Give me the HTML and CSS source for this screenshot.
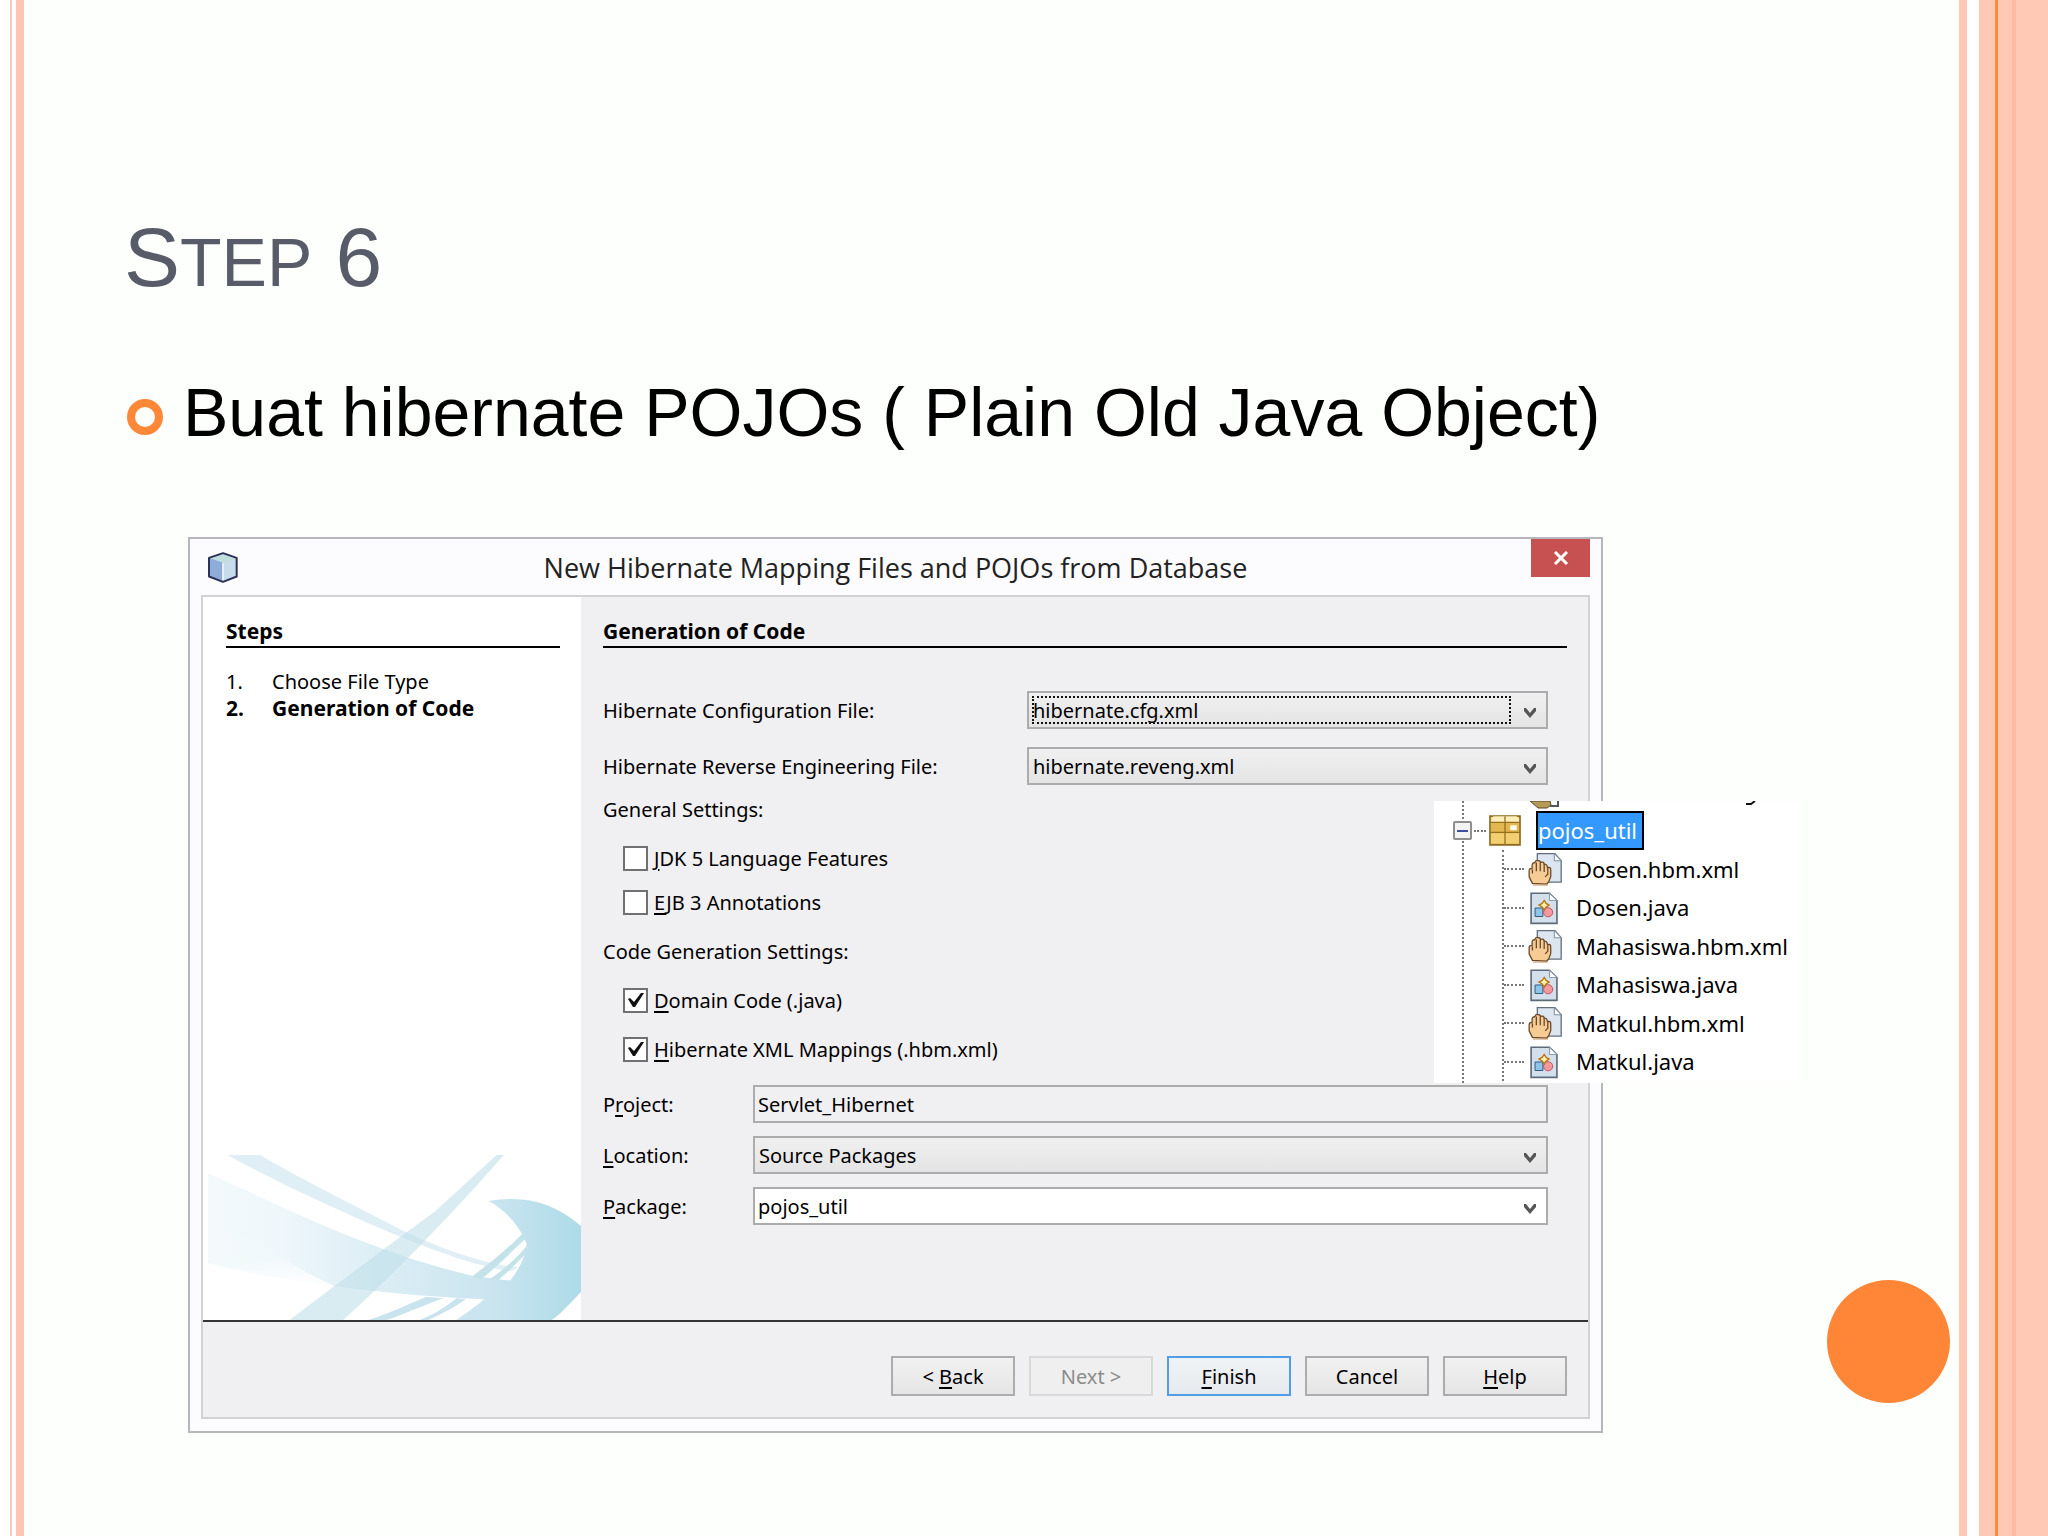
FILE: index.html
```
<!DOCTYPE html>
<html lang="id">
<head>
  <meta charset="UTF-8">
  <meta name="viewport" content="width=device-width, initial-scale=1.0">
  <title>Step 6</title>
  <link rel="stylesheet" href="styles.css">
</head>
<body>
  <!-- Icon definitions -->
  <svg class="defs" aria-hidden="true">
    <symbol id="icon-hbm" viewBox="322 186 106 104">
      <path d="M350 191h54l19 22v65h-73z" fill="#dce6f1" stroke="#62707f" stroke-width="4"/>
      <path d="M402 191v22h21z" fill="#fff" stroke="#7d8b9a" stroke-width="3"/>
      <path d="M335 282l-10-20v-20q2-8 9-4v-12q1-8 8-7 2-8 9-7 8 0 9 6 9-4 11 5 8-1 9 6l1 5q10-4 10 7v20l-6 16-6 7z" fill="#f6cb94" stroke="#6b4a2c" stroke-width="4" stroke-linejoin="round"/>
      <path d="M335 240v12M347 218v27M359 218v27M371 222v25M382 232v22l-8 8" fill="none" stroke="#6b4a2c" stroke-width="4"/>
      <path d="M336 287h46" stroke="#c98e58" stroke-width="3"/>
    </symbol>
    <symbol id="icon-java" viewBox="322 301 106 104">
      <path d="M331 308h56l23 22v70h-79z" fill="#d3e0ec" stroke="#5c6b7a" stroke-width="5"/>
      <path d="M387 308v22h23z" fill="#fff" stroke="#8a97a5" stroke-width="3"/>
      <path d="M343 353h24v26h-24z" fill="#8cc4ea" stroke="#33597c" stroke-width="3"/>
      <circle cx="383" cy="366" r="14" fill="#f49a9e" stroke="#c4525c" stroke-width="3"/>
      <path d="M371 330l6 9 9 5-9 6-6 9-6-9-10-6 10-5z" fill="#fff0b0" stroke="#b87412" stroke-width="4"/>
    </symbol>
  </svg>

  <div class="slide">
    <div class="stripes-left"></div>

    <main class="content">
      <h1>S<span>TEP</span> 6</h1>

      <ul class="points">
        <li>Buat hibernate POJOs ( Plain Old Java Object)</li>
      </ul>

      <section class="dialog">
        <header class="titlebar">
          <svg class="app-icon" viewBox="84 62 90 92">
            <path d="M129 65l41 14v56l-41 16-42-16V79z" fill="#a9c3e6"/>
            <path d="M87 79l42 14v58l-42-16z" fill="#8fabd9"/>
            <path d="M129 93l41-14v56l-41 16z" fill="#c6dcec"/>
            <path d="M129 65l41 14-41 15-42-15z" fill="#bfdfdd"/>
            <path d="M129 94v56" fill="none" stroke="#eef7fb" stroke-width="5"/>
            <path d="M129 65l41 14v56l-41 16-42-16V79z" fill="none" stroke="#2c3157" stroke-width="6" stroke-linejoin="round"/>
          </svg>
          <h2>New Hibernate Mapping Files and POJOs from Database</h2>
          <button class="close" type="button" aria-label="Close">
            <svg viewBox="0 0 16 14"><path d="M2 1l12 12M14 1L2 13" stroke="#fff" stroke-width="3"/></svg>
          </button>
        </header>

        <form class="frame">
          <div class="panes">
            <aside class="steps">
              <h3>Steps</h3>
              <ol>
                <li><span>1.</span>Choose File Type</li>
                <li class="current"><span>2.</span>Generation of Code</li>
              </ol>
              <svg class="waves" viewBox="55 75 1118 495" preserveAspectRatio="none">
                <defs>
                  <linearGradient id="band" gradientUnits="userSpaceOnUse" x1="55" y1="0" x2="900" y2="0">
                    <stop offset="0" stop-color="#f3fafc"/>
                    <stop offset="0.25" stop-color="#eff7fb"/>
                    <stop offset="0.6" stop-color="#dceef5"/>
                    <stop offset="1" stop-color="#cbe5f0"/>
                  </linearGradient>
                  <linearGradient id="curl" gradientUnits="userSpaceOnUse" x1="895" y1="0" x2="1173" y2="0">
                    <stop offset="0" stop-color="#cbe5f0"/>
                    <stop offset="1" stop-color="#aedbe8"/>
                  </linearGradient>
                  <linearGradient id="fade" x1="0" y1="0" x2="0.3" y2="1">
                    <stop offset="0" stop-color="#fff" stop-opacity="0"/>
                    <stop offset="0.7" stop-color="#fff" stop-opacity="0.1"/>
                    <stop offset="1" stop-color="#fff" stop-opacity="0.8"/>
                  </linearGradient>
                </defs>
                <path d="M55 130C240 210 520 360 850 438L960 452 890 508C650 500 300 460 55 400z" fill="url(#band)"/>
                <path d="M55 250C200 330 320 420 440 470 300 460 150 440 55 400z" fill="url(#fade)"/>
                <path d="M113 75h97C340 150 520 240 640 302 760 360 880 400 985 412L960 424C820 400 680 340 560 290 400 220 250 150 113 75z" fill="#e0eff6"/>
                <path d="M920 75h22C850 180 650 400 460 570H300C430 470 620 330 740 240z" fill="#bfdfea" fill-opacity="0.6"/>
                <path d="M535 570C600 550 660 520 710 500l50 5C690 530 640 555 590 570zM690 570C740 550 775 525 800 505l28 3C790 535 750 555 715 570z" fill="#c9e4ed"/>
                <path d="M845 440C900 400 960 350 1000 308l5 20C960 370 920 410 875 447zM900 447C940 420 980 385 1008 350l2 18C980 400 950 430 925 450z" fill="#c3e3e9"/>
                <path d="M895 213C1000 195 1090 215 1173 288v198C1140 520 1110 555 1085 570H800C850 535 870 520 885 505V445L960 452C985 420 1005 390 1010 340 985 280 940 235 895 213z" fill="url(#curl)"/>
              </svg>
            </aside>

            <div class="settings">
              <h3>Generation of Code</h3>

              <div class="row wide">
                <label for="config">Hibernate Configuration File:</label>
                <div class="combo focused">
                  <select id="config"><option>hibernate.cfg.xml</option></select>
                  <svg class="arrow" viewBox="0 0 14 12"><path d="M1 1v3l6 7 6-7V1h-2L7 6 3 1z"/></svg>
                </div>
              </div>
              <div class="row wide">
                <label for="reveng">Hibernate Reverse Engineering File:</label>
                <div class="combo">
                  <select id="reveng"><option>hibernate.reveng.xml</option></select>
                  <svg class="arrow" viewBox="0 0 14 12"><path d="M1 1v3l6 7 6-7V1h-2L7 6 3 1z"/></svg>
                </div>
              </div>

              <fieldset class="general">
                <legend>General Settings:</legend>
                <label class="check"><input type="checkbox"><span><u>J</u>DK 5 Language Features</span></label>
                <label class="check"><input type="checkbox"><span><u>E</u>JB 3 Annotations</span></label>
              </fieldset>

              <fieldset class="codegen">
                <legend>Code Generation Settings:</legend>
                <label class="check"><input type="checkbox" checked><span><u>D</u>omain Code (.java)</span></label>
                <label class="check"><input type="checkbox" checked><span><u>H</u>ibernate XML Mappings (.hbm.xml)</span></label>
              </fieldset>

              <div class="row">
                <label for="project">P<u>r</u>oject:</label>
                <input class="text" id="project" type="text" value="Servlet_Hibernet" readonly>
              </div>
              <div class="row">
                <label for="location"><u>L</u>ocation:</label>
                <div class="combo">
                  <select id="location"><option>Source Packages</option></select>
                  <svg class="arrow" viewBox="0 0 14 12"><path d="M1 1v3l6 7 6-7V1h-2L7 6 3 1z"/></svg>
                </div>
              </div>
              <div class="row">
                <label for="package"><u>P</u>ackage:</label>
                <div class="combo editable">
                  <select id="package"><option>pojos_util</option></select>
                  <svg class="arrow" viewBox="0 0 14 12"><path d="M1 1v3l6 7 6-7V1h-2L7 6 3 1z"/></svg>
                </div>
              </div>
            </div>
          </div>

          <footer class="buttons">
            <button type="button">&lt; <u>B</u>ack</button>
            <button type="button" disabled>Next &gt;</button>
            <button type="button" class="default"><u>F</u>inish</button>
            <button type="button">Cancel</button>
            <button type="button"><u>H</u>elp</button>
          </footer>
        </form>

        <!-- Project tree lying over the dialog -->
        <div class="tree">
          <svg class="cut-row" viewBox="0 0 366 8">
            <path d="M96 0h20l1 4-4 3h-9z" fill="#b69a55" stroke="#55482a" stroke-width="1"/>
            <path d="M116 5h8V0" fill="none" stroke="#4d5864" stroke-width="2"/>
            <path d="M312 3h5l4-3" fill="none" stroke="#111" stroke-width="2"/>
          </svg>
          <div class="package">
            <button class="toggle" type="button" aria-label="Collapse"></button>
            <i></i>
            <svg class="box" viewBox="206 79 98 94">
              <path d="M209 82h92v88h-92z" fill="#e9c05a" stroke="#8d6a1e" stroke-width="5"/>
              <path d="M213 88l7-6h70l8 6v13h-85z" fill="#fbeebb"/>
              <path d="M212 103h86v28h-86z" fill="#e2b650"/>
              <path d="M212 135h86v30h-86z" fill="#f2d071"/>
              <path d="M271 110h20v15h-20z" fill="#fffbe6"/>
              <path d="M209 101h92M209 132h92M255 82v88" stroke="#96701f" stroke-width="4"/>
            </svg>
            <span class="selected">pojos_util</span>
          </div>
          <ul>
            <li><svg><use href="#icon-hbm"/></svg>Dosen.hbm.xml</li>
            <li><svg><use href="#icon-java"/></svg>Dosen.java</li>
            <li><svg><use href="#icon-hbm"/></svg>Mahasiswa.hbm.xml</li>
            <li><svg><use href="#icon-java"/></svg>Mahasiswa.java</li>
            <li><svg><use href="#icon-hbm"/></svg>Matkul.hbm.xml</li>
            <li><svg><use href="#icon-java"/></svg>Matkul.java</li>
          </ul>
        </div>
      </section>

      <div class="dot"></div>
    </main>

    <div class="stripes-right"></div>
  </div>
</body>
</html>
```
FILE: styles.css
```
*,
*::before,
*::after {
  box-sizing: border-box;
  margin: 0;
  padding: 0;
}

body {
  font-family: "Liberation Sans", Arial, sans-serif;
  background-color: #fdfffd;
  color: #000;
}

.defs {
  display: none;
}

.slide {
  display: flex;
  min-height: 100vh;
}

.stripes-left {
  width: 24px;
  background: linear-gradient(to right, #fff 10px, #fbc9b7 10px, #fbc9b7 12px, #fff 12px, #fff 16px, #fcc6b2 16px);
}

.stripes-right {
  width: 89px;
  background: linear-gradient(to right,
    #ffc8b4 8px, #fff 8px, #fff 20px,
    #ffc9b5 20px, #ffc9b5 36px,
    #ff8a3c 36px, #ff8a3c 39px,
    #ffc9b5 39px, #ffc9b5 53px,
    #ffbba0 53px, #ffbba0 57px,
    #ffc9b5 57px);
}

.content {
  position: relative;
  flex: 1;
  padding: 209px 0 102px 100px;
}

h1 {
  font-size: 84px;
  font-weight: normal;
  line-height: 96px;
  color: #585c69;
}

h1 span {
  font-size: 68px;
  line-height: 1;
}

.points {
  list-style: none;
  margin-top: 68px;
  font-size: 68px;
  line-height: 78px;
}

.points li {
  display: flex;
  align-items: center;
  gap: 20px;
  padding-left: 3px;
}

.points li::before {
  content: "";
  width: 36px;
  height: 36px;
  margin-top: 10px;
  border: 8px solid #ff8838;
  border-radius: 50%;
}

.dot {
  position: absolute;
  right: 9px;
  bottom: 133px;
  width: 123px;
  height: 123px;
  border-radius: 50%;
  background-color: #ff8637;
}

/* Dialog */
.dialog {
  position: relative;
  margin: 86px 356px 0 64px;
  padding: 0 11px 12px;
  border: 2px solid #b6b6bb;
  background-color: #fcfbfe;
  font-family: "Noto Sans", Tahoma, sans-serif;
  font-size: 20px;
  line-height: 27px;
}

.titlebar {
  display: grid;
  grid-template-columns: 1fr auto 1fr;
  align-items: center;
  height: 56px;
}

.titlebar h2 {
  font-family: "Open Sans", "Segoe UI", sans-serif;
  font-size: 27px;
  font-weight: normal;
  color: #222;
}

.app-icon {
  width: 30px;
  height: 31px;
  margin-left: 7px;
}

.close {
  display: flex;
  align-items: center;
  justify-content: center;
  align-self: start;
  justify-self: end;
  width: 59px;
  height: 38px;
  border: none;
  background-color: #c75050;
}

.close svg {
  width: 16px;
  height: 14px;
}

.frame {
  border: 2px solid #d2d2d5;
  background-color: #f0eff1;
}

.panes {
  display: flex;
  min-height: 725px;
  border-bottom: 2px solid #333;
}

h3 {
  padding: 21px 0 1px;
  border-bottom: 2px solid #000;
  font-size: 21px;
}

.steps {
  display: flex;
  flex-direction: column;
  width: 378px;
  padding: 0 21px 0 23px;
  background-color: #fff;
}

.steps ol {
  list-style: none;
  margin-top: 20px;
}

.steps li {
  display: flex;
}

.steps li span {
  width: 46px;
}

.steps .current {
  font-size: 21px;
  font-weight: bold;
}

.waves {
  height: 165px;
  margin: auto -21px 0 -18px;
}

.settings {
  flex: 1;
  padding: 0 21px 0 22px;
}

.row {
  display: flex;
  align-items: center;
  margin: 13px 19px 0 0;
}

.row label {
  width: 150px;
}

.row.wide {
  margin-top: 18px;
}

.row.wide label {
  width: 424px;
}

h3 + .row.wide {
  margin-top: 43px;
}

.combo {
  position: relative;
  flex: 1;
}

.combo select,
.text {
  display: block;
  width: 100%;
  height: 38px;
  padding: 0 4px;
  border: 2px solid #acacac;
  border-radius: 0;
  appearance: none;
  background: linear-gradient(#f0f0f0, #e4e4e5);
  color: #000;
  font: inherit;
}

.text {
  flex: 1;
  background: #f0eff1;
  padding: 0 3px;
}

.combo.editable select {
  background: #fff;
  padding: 0 3px;
}

.combo.focused::after {
  content: "";
  position: absolute;
  inset: 5px 37px 5px 5px;
  border: 2px dotted #111;
  pointer-events: none;
}

.arrow {
  position: absolute;
  right: 10px;
  top: 16px;
  width: 16px;
  height: 12px;
  fill: #555;
  pointer-events: none;
}

fieldset {
  border: none;
}

.general {
  margin-top: 11px;
}

.codegen {
  margin: 22px 0;
}

.check {
  display: flex;
  align-items: center;
  gap: 6px;
  margin: 22px 0 0 20px;
}

.general .check + .check {
  margin-top: 17px;
}

.check input {
  width: 25px;
  height: 25px;
  border: 2px solid #707070;
  appearance: none;
  background: #fff;
}

.check input:checked {
  background: #fff url("data:image/svg+xml,%3Csvg xmlns='http://www.w3.org/2000/svg' viewBox='0 0 21 21'%3E%3Cpath d='M3 9l2-1 4 4 7-9h3L10 17H8z' fill='%23111'/%3E%3C/svg%3E") center / 21px;
}

u {
  text-underline-offset: 3px;
  text-decoration-thickness: 2px;
}

.buttons {
  display: flex;
  justify-content: flex-end;
  gap: 14px;
  padding: 34px 21px 21px;
}

.buttons button {
  width: 124px;
  height: 40px;
  border: 2px solid #acacac;
  background: linear-gradient(#f1f1f1, #e5e5e6);
  color: #000;
  font: inherit;
}

.buttons button:disabled {
  border-color: #d9d9d9;
  background: #efeff0;
  color: #8b8b8b;
}

.buttons .default {
  border-color: #4f9fe6;
  background: linear-gradient(#f0f3f5, #e6eaee);
}

/* Tree */
.tree {
  position: absolute;
  top: 262px;
  right: -199px;
  width: 366px;
  padding: 10px 0 2px;
  background-color: #fff;
  font-size: 22px;
}

.tree::before {
  content: "";
  position: absolute;
  top: 0;
  bottom: 0;
  left: 28px;
  border-left: 2px dotted #777;
}

.cut-row {
  position: absolute;
  top: 0;
  left: 0;
  width: 366px;
  height: 8px;
}

.package {
  display: flex;
  align-items: center;
  height: 39px;
  padding-left: 19px;
}

.toggle {
  position: relative;
  width: 19px;
  height: 19px;
  border: 2px solid #8e8e8e;
  border-radius: 2px;
  background: linear-gradient(#3b4f9e, #3b4f9e) center / 11px 2px no-repeat #f3f3f3;
}

.package i {
  width: 12px;
  margin: 0 3px 0 2px;
  border-top: 2px dotted #777;
}

.box {
  width: 32px;
  height: 31px;
}

.selected {
  height: 39px;
  margin-left: 15px;
  padding-right: 5px;
  border: 2px solid #000;
  background-color: #3399ff;
  color: #fff;
  line-height: 34px;
}

.tree ul {
  display: flex;
  flex-direction: column;
  list-style: none;
  height: 231px;
  margin-left: 68px;
  border-left: 2px dotted #777;
}

.tree li {
  display: flex;
  flex: 1;
  align-items: center;
}

.tree li::before {
  content: "";
  width: 20px;
  margin-right: 4px;
  border-top: 2px dotted #777;
}

.tree li svg {
  width: 35px;
  height: 34px;
  margin-right: 13px;
}
```
